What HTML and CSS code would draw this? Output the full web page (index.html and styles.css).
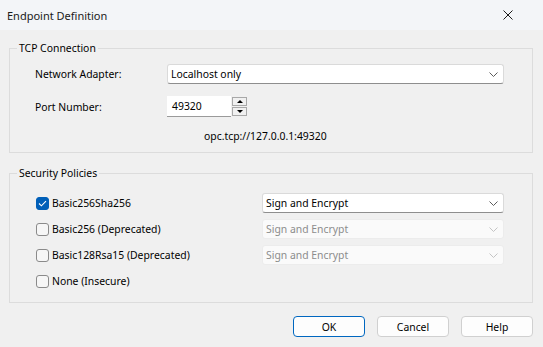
FILE: index.html
```html
<!doctype html>
<html lang="en">
  <head>
    <meta charset="UTF-8" />
    <title>Endpoint Definition</title>
    <link rel="stylesheet" href="styles.css">
  </head>
  <body>
    <div class="window">
      <div class="titlebar">
        <span class="title">Endpoint Definition</span>
        <svg class="close" width="10" height="10" viewBox="0 0 10 10">
          <path d="M0.5 0.5 L9.5 9.5 M9.5 0.5 L0.5 9.5" stroke="#1a1a1a" stroke-width="1" fill="none" />
        </svg>
      </div>

      <div class="content">
        <fieldset class="group tcp">
          <legend>TCP Connection</legend>
          <div class="form-grid">
            <label>Network Adapter:</label>
            <div class="select">
              <span>Localhost only</span>
              <svg class="chevron" width="9" height="5" viewBox="0 0 9 5">
                <path d="M0.5 0.5 L4.5 4.5 L8.5 0.5" stroke="#5c5c5c" fill="none" />
              </svg>
            </div>

            <label>Port Number:</label>
            <div class="spin">
              <span class="spin-value">49320</span>
              <div class="spin-btns">
                <span class="spin-btn"><i class="tri up"></i></span>
                <span class="spin-btn"><i class="tri down"></i></span>
              </div>
            </div>

            <span></span>
            <div class="endpoint-url">opc.tcp://127.0.0.1:49320</div>
          </div>
        </fieldset>

        <fieldset class="group security">
          <legend>Security Policies</legend>
          <div class="policy-grid">
            <label class="check">
              <span class="box checked">
                <svg width="9" height="7" viewBox="0 0 9 7">
                  <path d="M1 3.5 L3.4 5.8 L8 1.2" stroke="#fff" stroke-width="1.1" fill="none" />
                </svg>
              </span>
              Basic256Sha256
            </label>
            <div class="select">
              <span>Sign and Encrypt</span>
              <svg class="chevron" width="9" height="5" viewBox="0 0 9 5">
                <path d="M0.5 0.5 L4.5 4.5 L8.5 0.5" stroke="#5c5c5c" fill="none" />
              </svg>
            </div>

            <label class="check"><span class="box"></span>Basic256 (Deprecated)</label>
            <div class="select disabled">
              <span>Sign and Encrypt</span>
              <svg class="chevron" width="9" height="5" viewBox="0 0 9 5">
                <path d="M0.5 0.5 L4.5 4.5 L8.5 0.5" stroke="#c4c4c4" fill="none" />
              </svg>
            </div>

            <label class="check"><span class="box"></span>Basic128Rsa15 (Deprecated)</label>
            <div class="select disabled">
              <span>Sign and Encrypt</span>
              <svg class="chevron" width="9" height="5" viewBox="0 0 9 5">
                <path d="M0.5 0.5 L4.5 4.5 L8.5 0.5" stroke="#c4c4c4" fill="none" />
              </svg>
            </div>

            <label class="check"><span class="box"></span>None (Insecure)</label>
            <span></span>
          </div>
        </fieldset>

        <div class="buttons">
          <button class="btn default">OK</button>
          <button class="btn">Cancel</button>
          <button class="btn">Help</button>
        </div>
      </div>
    </div>
  </body>
</html>
```

FILE: styles.css
```css
* {
  margin: 0;
  padding: 0;
  box-sizing: border-box;
}

body {
  width: 543px;
  height: 347px;
  overflow: hidden;
  font-family: "Noto Sans", "Open Sans", sans-serif;
  font-size: 10.4px;
  color: #000;
  background: #f0f0f0;
}

.window {
  height: 100%;
  display: flex;
  flex-direction: column;
}

.titlebar {
  height: 30px;
  flex-shrink: 0;
  display: flex;
  align-items: center;
  justify-content: space-between;
  padding: 0 30px 0 7px;
  background: #f3f5f8;
}

.title {
  font-size: 11px;
  color: #1a1a1a;
}

.content {
  padding: 10px 10px 0 9px;
}

.group {
  border: 1px solid #dcdcdc;
  padding: 0;
}

.group legend {
  margin-left: 7px;
  padding: 0 2px;
  line-height: 16px;
}

.form-grid {
  display: grid;
  grid-template-columns: 132px 1fr;
  row-gap: 12px;
  align-items: center;
  padding: 8px 28px 9px 25px;
}

.select {
  height: 20px;
  display: flex;
  align-items: center;
  justify-content: space-between;
  padding: 0 5px 0 3px;
  background: #fff;
  border: 1px solid #dadada;
  border-bottom-color: #8e8e8e;
  border-radius: 3px;
}

.select.disabled {
  background: #fafafa;
  border-color: #ececec;
  color: #8c8c8c;
}

.spin {
  display: flex;
  height: 21px;
}

.spin-value {
  width: 64px;
  display: flex;
  align-items: center;
  padding-left: 5px;
  background: #fff;
  border-bottom: 1px solid #9a9a9a;
}

.spin-btns {
  width: 17px;
  display: flex;
  flex-direction: column;
  gap: 1px;
  padding: 1px;
}

.spin-btn {
  flex: 1;
  display: flex;
  align-items: center;
  justify-content: center;
  background: #f0f0f0;
  border: 1px solid #a8a8a8;
}

.tri {
  width: 0;
  height: 0;
  border-left: 3px solid transparent;
  border-right: 3px solid transparent;
}

.tri.up {
  border-bottom: 3px solid #000;
}

.tri.down {
  border-top: 3px solid #000;
}

.endpoint-url {
  line-height: 14px;
  padding-left: 37px;
}

.security {
  margin-top: 12px;
}

.policy-grid {
  display: grid;
  grid-template-columns: 226px 1fr;
  grid-auto-rows: 20px;
  row-gap: 6px;
  align-items: center;
  padding: 12px 28px 11px 26px;
}

.check {
  display: flex;
  align-items: center;
  gap: 3px;
}

.box {
  width: 13px;
  height: 13px;
  display: flex;
  align-items: center;
  justify-content: center;
  border: 1px solid #8a8a8a;
  border-radius: 3px;
  background: #f6f6f6;
}

.box.checked {
  border-color: #005fb8;
  background: #005fb8;
}

.buttons {
  display: flex;
  justify-content: flex-end;
  gap: 12px;
  margin-top: 13px;
}

.btn {
  width: 72px;
  height: 21px;
  font-family: inherit;
  font-size: inherit;
  color: #000;
  background: #fdfdfd;
  border: 1px solid #d0d0d0;
  border-radius: 4px;
}

.btn.default {
  border-color: #0067c0;
}
```
